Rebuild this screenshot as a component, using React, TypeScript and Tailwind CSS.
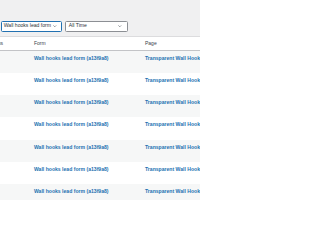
import React from 'react';

const Chevron = () => (
  <svg viewBox="0 0 10 6" className="w-[3.6px] h-[2.2px] shrink-0" fill="none" stroke="#50575e" strokeWidth="1.6">
    <path d="M1 1l4 4 4-4" />
  </svg>
);

const rows = Array.from({ length: 7 });

export default function App() {
  return (
    <div className="w-[200px] h-[200px] overflow-hidden bg-[#f0f0f1] font-['Liberation_Sans',Arial,sans-serif] text-[#2c3338]">
      {/* Filters */}
      <div className="flex items-start gap-[3px] h-[36px] pt-[20.5px] pl-[0.5px]">
        <div className="flex items-center justify-between w-[61.5px] h-[11px] pl-[2.2px] pr-[4.2px] bg-white border-[0.8px] border-[#2271b1] rounded-[1.5px] text-[5.1px] leading-none whitespace-nowrap">
          <span>Wall hooks lead form</span>
          <Chevron />
        </div>
        <div className="flex items-center justify-between w-[63px] h-[11px] pl-[2.8px] pr-[5px] bg-white border-[0.6px] border-[#8c8f94] rounded-[1.5px] text-[5.1px] leading-none whitespace-nowrap">
          <span>All Time</span>
          <Chevron />
        </div>
      </div>

      {/* Table */}
      <div className="-ml-[14px] w-[260px] bg-white border-t-[0.5px] border-[#dcdcde]">
        <div className="flex items-center h-[13.5px] border-b-[0.6px] border-[#c3c4c7] text-[5px] leading-none text-[#3c434a]">
          <div className="w-[48px] pl-[2.8px]">Status</div>
          <div className="w-[111px]">Form</div>
          <div className="flex-1">Page</div>
        </div>
        {rows.map((_, i) => (
          <div
            key={i}
            className={`flex items-start h-[22.33px] pt-[5px] text-[5.1px] leading-[5.6px] font-bold text-[#2271b1] whitespace-nowrap ${
              i % 2 === 0 ? 'bg-[#f6f7f7]' : 'bg-white'
            }`}
          >
            <div className="w-[48px]" />
            <div className="w-[111px]">Wall hooks lead form (a13f9a8)</div>
            <div className="flex-1">Transparent Wall Hooks</div>
          </div>
        ))}
      </div>
    </div>
  );
}
